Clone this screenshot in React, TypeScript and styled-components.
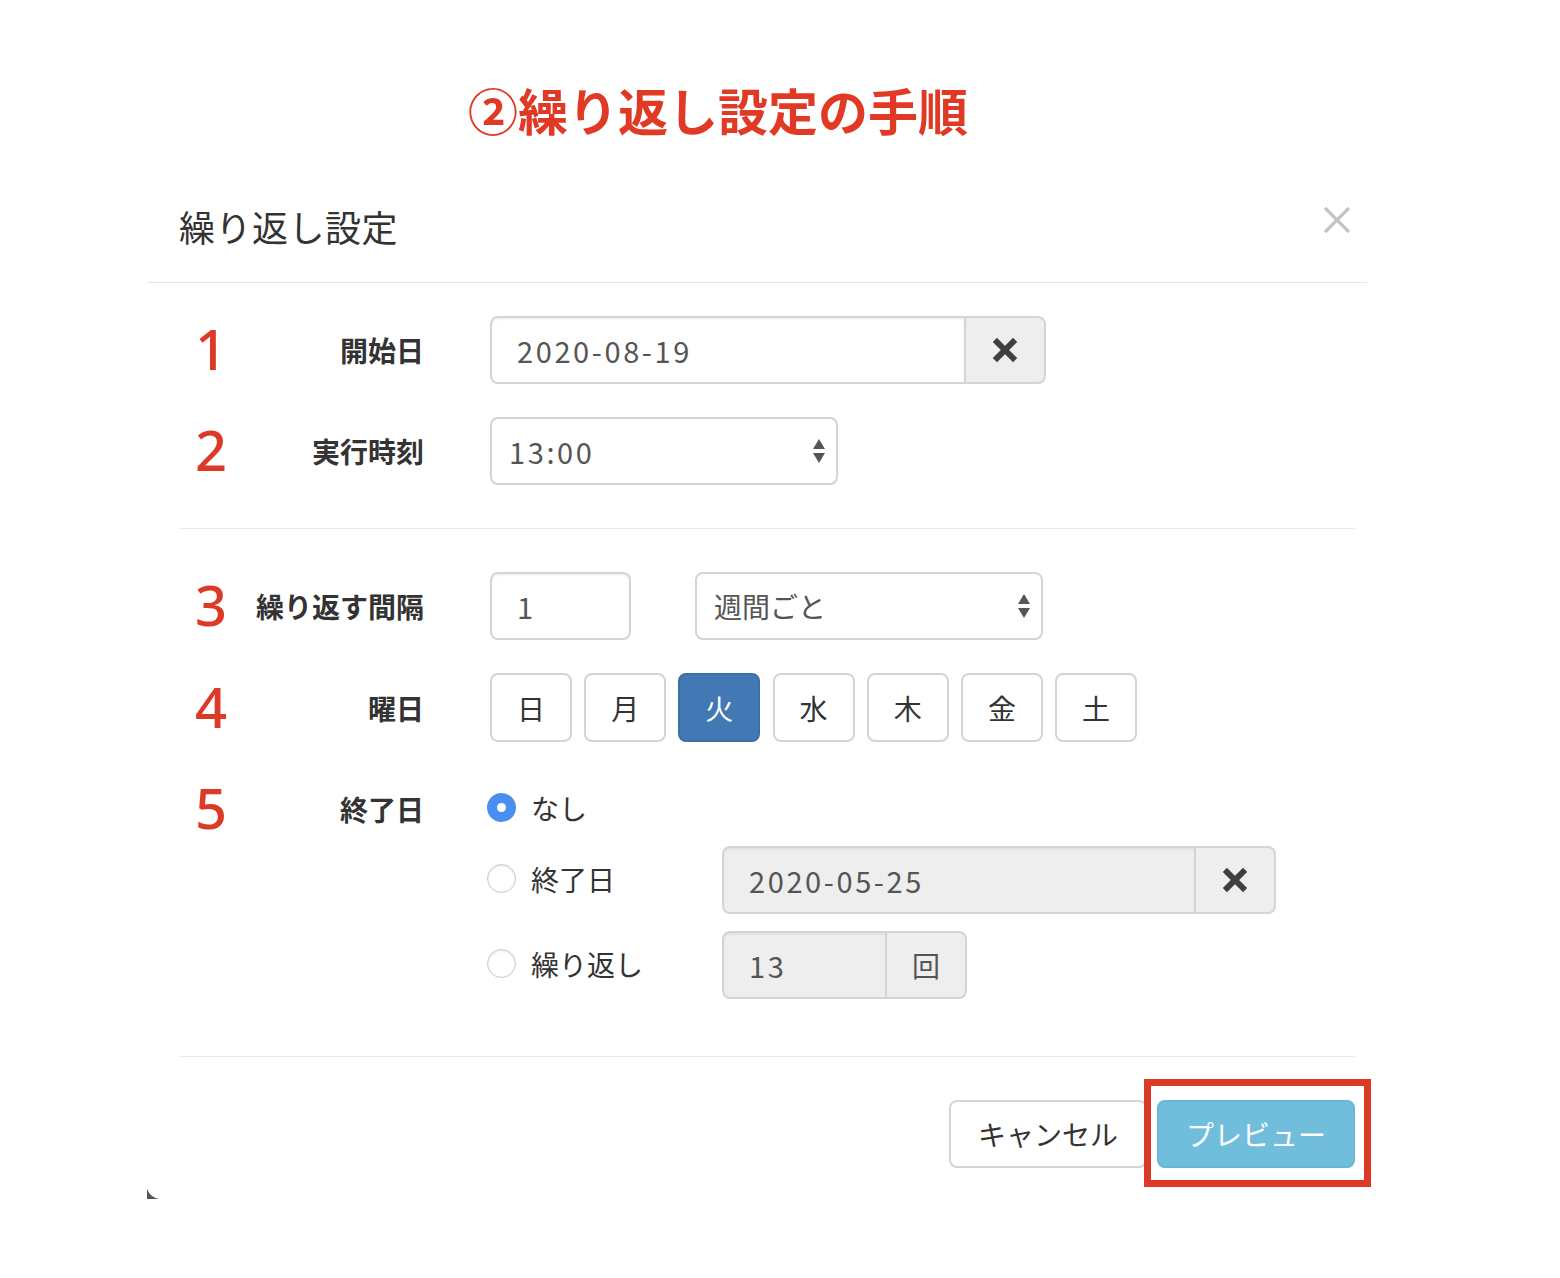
import React from "react";
import styled, { createGlobalStyle } from "styled-components";

const GlobalStyle = createGlobalStyle`
  html, body {
    margin: 0;
    padding: 0;
    background: #ffffff;
  }
  body {
    font-family: "Noto Sans CJK JP", "Noto Sans", sans-serif;
    color: #333333;
  }
  * { box-sizing: border-box; }
`;

const Page = styled.div`
  width: 1560px;
  min-height: 1278px;
  padding-top: 79px;
  display: flex;
  flex-direction: column;
`;

const PageTitle = styled.h1`
  margin: 0 0 32px 0;
  padding-left: 468px;
  font-size: 50px;
  line-height: 60px;
  font-weight: 700;
  color: #e03a26;
  letter-spacing: 0;
  white-space: nowrap;
`;

const Modal = styled.div`
  position: relative;
  margin-left: 147px;
  width: 1220px;
  background: #fff;
  display: flex;
  flex-direction: column;
`;

const CornerMark = styled.svg`
  position: absolute;
  left: 0;
  bottom: 0;
  width: 12px;
  height: 10px;
`;

const Header = styled.div`
  height: 112px;
  padding: 30px 15px 30px 32px;
  border-bottom: 1px solid #e5e5e5;
  display: flex;
  align-items: center;
  justify-content: space-between;
`;

const HeaderTitle = styled.h4`
  margin: 0;
  font-size: 36px;
  line-height: 51px;
  font-weight: 400;
  color: #333;
  letter-spacing: 0.5px;
`;

const CloseButton = styled.button`
  border: 0;
  background: transparent;
  padding: 0;
  width: 30px;
  height: 30px;
  margin-top: -14px;
  display: flex;
  align-items: center;
  justify-content: center;
  cursor: pointer;
`;

const Body = styled.div`
  padding: 0 12px 0 32px;
  display: flex;
  flex-direction: column;
`;

const Section = styled.div<{ $top: number; $bottom: number }>`
  padding-top: ${(p) => p.$top}px;
  padding-bottom: ${(p) => p.$bottom}px;
  display: flex;
  flex-direction: column;
  gap: 33px;
`;

const Divider = styled.hr`
  margin: 0;
  border: 0;
  border-top: 1px solid #eaeaea;
  height: 0;
`;

const Row = styled.div<{ $alignTop?: boolean }>`
  display: grid;
  grid-template-columns: 245px 1fr;
  column-gap: 66px;
  align-items: ${(p) => (p.$alignTop ? "start" : "center")};
`;

const LabelCell = styled.div`
  height: 68px;
  display: flex;
  align-items: center;
`;

const StepNumber = styled.span`
  width: 36px;
  margin-left: 14px;
  text-align: center;
  font-family: "Noto Sans", "Liberation Sans", sans-serif;
  font-size: 56px;
  line-height: 1;
  font-weight: 500;
  color: #dc3a27;
  margin-top: -4px;
`;

const FieldLabel = styled.label`
  flex: 1;
  text-align: right;
  font-size: 28px;
  font-weight: 700;
  color: #333;
  white-space: nowrap;
`;

const Controls = styled.div<{ $gap?: number }>`
  display: flex;
  align-items: center;
  gap: ${(p) => p.$gap ?? 0}px;
`;

const InputGroup = styled.div<{ $width: number }>`
  width: ${(p) => p.$width}px;
  height: 68px;
  display: flex;
`;

const TextBox = styled.div<{ $width?: number; $disabled?: boolean; $grouped?: boolean }>`
  ${(p) => (p.$width ? `width: ${p.$width}px;` : "flex: 1;")}
  height: 68px;
  padding-left: 25px;
  display: flex;
  align-items: center;
  border: 2px solid #d4d4d4;
  border-radius: ${(p) => (p.$grouped ? "8px 0 0 8px" : "8px")};
  background: ${(p) => (p.$disabled ? "#eeeeee" : "#ffffff")};
  box-shadow: inset 0 2px 2px rgba(0, 0, 0, 0.05);
  font-size: 28px;
  color: #555;
  line-height: 1;
`;

const Value = styled.span<{ $numeric?: boolean }>`
  font-size: ${(p) => (p.$numeric ? "29px" : "28px")};
  letter-spacing: ${(p) => (p.$numeric ? "2.6px" : "0")};
  color: #555;
  white-space: nowrap;
`;

const Addon = styled.div`
  width: 82px;
  height: 68px;
  margin-left: -2px;
  display: flex;
  align-items: center;
  justify-content: center;
  background: #eeeeee;
  border: 2px solid #d4d4d4;
  border-radius: 0 8px 8px 0;
  font-size: 28px;
  color: #555;
`;

const SelectBox = styled.div<{ $width: number }>`
  width: ${(p) => p.$width}px;
  height: 68px;
  padding: 0 10px 0 17px;
  display: flex;
  align-items: center;
  justify-content: space-between;
  border: 2px solid #d4d4d4;
  border-radius: 8px;
  background: #fff;
  font-size: 28px;
  color: #555;
`;

const DayButton = styled.button<{ $active?: boolean }>`
  width: 82px;
  height: 69px;
  padding: 0;
  border: 2px solid ${(p) => (p.$active ? "#3b6fa6" : "#d4d4d4")};
  border-radius: 8px;
  background: ${(p) => (p.$active ? "#4279b4" : "#ffffff")};
  color: ${(p) => (p.$active ? "#ffffff" : "#333")};
  font-family: "Noto Sans CJK JP", sans-serif;
  font-size: 28px;
  display: flex;
  align-items: center;
  justify-content: center;
`;

const DayList = styled.div`
  display: flex;
  gap: 12.2px;
`;

const RadioList = styled.div`
  display: flex;
  flex-direction: column;
`;

const RadioLine = styled.div<{ $top: number; $height: number }>`
  margin-top: ${(p) => p.$top}px;
  height: ${(p) => p.$height}px;
  display: grid;
  grid-template-columns: 232px auto;
  align-items: center;
`;

const RadioLabel = styled.label`
  margin-left: -3px;
  margin-top: -3px;
  display: flex;
  align-items: center;
  gap: 15px;
  font-size: 28px;
  color: #333;
  white-space: nowrap;
`;

const RadioDot = styled.span<{ $checked?: boolean }>`
  width: 29px;
  height: 29px;
  border-radius: 50%;
  flex-shrink: 0;
  display: flex;
  align-items: center;
  justify-content: center;
  background: ${(p) => (p.$checked ? "#4b8ef1" : "#fff")};
  border: ${(p) => (p.$checked ? "none" : "1.5px solid #c8c8c8")};
  box-shadow: ${(p) => (p.$checked ? "none" : "inset 0 1px 2px rgba(0,0,0,0.12)")};
  &::after {
    content: "";
    display: ${(p) => (p.$checked ? "block" : "none")};
    width: 9px;
    height: 9px;
    border-radius: 50%;
    background: #fff;
  }
`;

const Footer = styled.div`
  margin: 0 12px 0 32px;
  border-top: 1px solid #eaeaea;
  padding: 43px 0 31px 0;
  display: flex;
  justify-content: flex-end;
  gap: 10px;
`;

const FooterButton = styled.button<{ $primary?: boolean }>`
  height: 68px;
  padding: 0 27px;
  border-radius: 8px;
  border: 2px solid ${(p) => (p.$primary ? "#62b8d8" : "#d4d4d4")};
  background: ${(p) => (p.$primary ? "#70bedc" : "#ffffff")};
  color: ${(p) => (p.$primary ? "#ffffff" : "#333")};
  font-family: "Noto Sans CJK JP", sans-serif;
  font-size: 28px;
  white-space: nowrap;
`;

const Highlight = styled.div`
  position: relative;
  display: flex;
  &::after {
    content: "";
    position: absolute;
    left: -13px;
    right: -16px;
    top: -21px;
    bottom: -19px;
    border: 7px solid #dc3a27;
    pointer-events: none;
  }
`;

const SortArrows = () => (
  <svg width="14" height="26" viewBox="0 0 14 26">
    <path d="M7 1 L13 11 L1 11 Z" fill="#555" />
    <path d="M1 15 L13 15 L7 25 Z" fill="#555" />
  </svg>
);

const BoldX = () => (
  <svg width="26" height="26" viewBox="0 0 26 26">
    <path d="M5 5 L21 21 M21 5 L5 21" stroke="#3f3f3f" strokeWidth="6" strokeLinecap="square" />
  </svg>
);

const ThinX = () => (
  <svg width="28" height="28" viewBox="0 0 28 28">
    <path d="M2 2 L26 26 M26 2 L2 26" stroke="#c4c4c4" strokeWidth="3.2" />
  </svg>
);

const days = ["日", "月", "火", "水", "木", "金", "土"];

export default function App() {
  return (
    <>
      <GlobalStyle />
      <Page>
        <PageTitle>②繰り返し設定の手順</PageTitle>
        <Modal>
          <Header>
            <HeaderTitle>繰り返し設定</HeaderTitle>
            <CloseButton aria-label="閉じる">
              <ThinX />
            </CloseButton>
          </Header>
          <Body>
            <Section $top={33} $bottom={43}>
              <Row>
                <LabelCell>
                  <StepNumber>1</StepNumber>
                  <FieldLabel>開始日</FieldLabel>
                </LabelCell>
                <Controls>
                  <InputGroup $width={556}>
                    <TextBox $grouped>
                      <Value $numeric>2020-08-19</Value>
                    </TextBox>
                    <Addon>
                      <BoldX />
                    </Addon>
                  </InputGroup>
                </Controls>
              </Row>
              <Row>
                <LabelCell>
                  <StepNumber>2</StepNumber>
                  <FieldLabel>実行時刻</FieldLabel>
                </LabelCell>
                <Controls>
                  <SelectBox $width={348}>
                    <Value $numeric>13:00</Value>
                    <SortArrows />
                  </SelectBox>
                </Controls>
              </Row>
            </Section>
            <Divider />
            <Section $top={43} $bottom={57}>
              <Row>
                <LabelCell>
                  <StepNumber>3</StepNumber>
                  <FieldLabel>繰り返す間隔</FieldLabel>
                </LabelCell>
                <Controls $gap={64}>
                  <TextBox $width={141}>
                    <Value $numeric>1</Value>
                  </TextBox>
                  <SelectBox $width={348}>
                    <Value>週間ごと</Value>
                    <SortArrows />
                  </SelectBox>
                </Controls>
              </Row>
              <Row>
                <LabelCell>
                  <StepNumber>4</StepNumber>
                  <FieldLabel>曜日</FieldLabel>
                </LabelCell>
                <DayList>
                  {days.map((d) => (
                    <DayButton key={d} $active={d === "火"}>
                      {d}
                    </DayButton>
                  ))}
                </DayList>
              </Row>
              <Row $alignTop>
                <LabelCell>
                  <StepNumber>5</StepNumber>
                  <FieldLabel>終了日</FieldLabel>
                </LabelCell>
                <RadioList>
                  <RadioLine $top={0} $height={68}>
                    <RadioLabel>
                      <RadioDot $checked />
                      なし
                    </RadioLabel>
                  </RadioLine>
                  <RadioLine $top={3} $height={68}>
                    <RadioLabel>
                      <RadioDot />
                      終了日
                    </RadioLabel>
                    <InputGroup $width={554}>
                      <TextBox $grouped $disabled>
                        <Value $numeric>2020-05-25</Value>
                      </TextBox>
                      <Addon>
                        <BoldX />
                      </Addon>
                    </InputGroup>
                  </RadioLine>
                  <RadioLine $top={17} $height={68}>
                    <RadioLabel>
                      <RadioDot />
                      繰り返し
                    </RadioLabel>
                    <InputGroup $width={245}>
                      <TextBox $grouped $disabled>
                        <Value $numeric>13</Value>
                      </TextBox>
                      <Addon>回</Addon>
                    </InputGroup>
                  </RadioLine>
                </RadioList>
              </Row>
            </Section>
          </Body>
          <Footer>
            <FooterButton>キャンセル</FooterButton>
            <Highlight>
              <FooterButton $primary>プレビュー</FooterButton>
            </Highlight>
          </Footer>
          <CornerMark viewBox="0 0 12 10">
            <path d="M0 0 L0 10 L12 10 Q3 8 0 0 Z" fill="#555" />
          </CornerMark>
        </Modal>
      </Page>
    </>
  );
}
